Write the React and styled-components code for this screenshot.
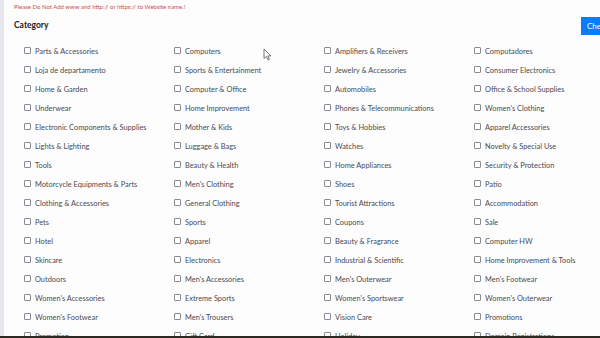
import styled, { createGlobalStyle } from 'styled-components';

const GlobalStyles = createGlobalStyle`
  html, body {
    margin: 0;
    padding: 0;
    background: #fdfdfe;
    overflow: hidden;
  }
  body {
    font-family: Lato, "Open Sans", sans-serif;
  }
`;

const CATEGORIES = [
  'Parts & Accessories', 'Computers', 'Amplifiers & Receivers', 'Computadores',
  'Loja de departamento', 'Sports & Entertainment', 'Jewelry & Accessories', 'Consumer Electronics',
  'Home & Garden', 'Computer & Office', 'Automobiles', 'Office & School Supplies',
  'Underwear', 'Home Improvement', 'Phones & Telecommunications', "Women's Clothing",
  'Electronic Components & Supplies', 'Mother & Kids', 'Toys & Hobbies', 'Apparel Accessories',
  'Lights & Lighting', 'Luggage & Bags', 'Watches', 'Novelty & Special Use',
  'Tools', 'Beauty & Health', 'Home Appliances', 'Security & Protection',
  'Motorcycle Equipments & Parts', "Men's Clothing", 'Shoes', 'Patio',
  'Clothing & Accessories', 'General Clothing', 'Tourist Attractions', 'Accommodation',
  'Pets', 'Sports', 'Coupons', 'Sale',
  'Hotel', 'Apparel', 'Beauty & Fragrance', 'Computer HW',
  'Skincare', 'Electronics', 'Industrial & Scientific', 'Home Improvement & Tools',
  'Outdoors', "Men's Accessories", "Men's Outerwear", "Men's Footwear",
  "Women's Accessories", 'Extreme Sports', "Women's Sportswear", "Women's Outerwear",
  "Women's Footwear", "Men's Trousers", 'Vision Care', 'Promotions',
  'Promotion', 'Gift Card', 'Holiday', 'Domain Registrations',
];

// ── Layout ────────────────────────────────────────────────────
const Page = styled.div`
  position: relative;
  width: 600px;
  height: 338px;
  display: flex;
  overflow: hidden;
  background: #fdfdfe;
`;

const SideStrip = styled.div`
  width: 4px;
  flex-shrink: 0;
  background: #e6e6ec;
`;

const Content = styled.div`
  flex: 1;
  padding: 3px 0 0 10px;
  min-width: 0;
`;

const Notice = styled.p`
  margin: 0;
  font-size: 6px;
  line-height: 8px;
  color: #cf4d4d;
`;

const HeaderRow = styled.div`
  display: flex;
  align-items: flex-start;
  justify-content: space-between;
  margin-top: 6px;
  margin-right: -30px;
`;

const Title = styled.h2`
  margin: 2px 0 0;
  font-size: 8.5px;
  line-height: 12px;
  font-weight: 700;
  color: #222;
`;

const CheckButton = styled.button`
  width: 49px;
  height: 18px;
  padding: 0 0 0 6px;
  border: none;
  background: #0a7cf7;
  color: #fff;
  font-family: Lato, sans-serif;
  font-size: 8px;
  text-align: left;
`;

const Grid = styled.div`
  display: grid;
  grid-template-columns: repeat(4, 150px);
  grid-auto-rows: 19px;
  margin: 10px 0 0 10px;
`;

const Item = styled.label`
  display: flex;
  align-items: center;
  gap: 4px;
  height: 13px;
  font-size: 7.4px;
  color: #4a4a52;
  white-space: nowrap;
`;

const Box = styled.span`
  width: 5px;
  height: 5px;
  border: 1px solid #8a8a92;
  border-radius: 1px;
  background: #fff;
  margin-top: -2px;
  flex-shrink: 0;
`;

const BottomBar = styled.div`
  position: absolute;
  left: 0;
  right: 0;
  bottom: 0;
  height: 2px;
  background: #2c2822;
`;

const Cursor = styled.svg`
  position: absolute;
  left: 263px;
  top: 48px;
`;

// ── App ───────────────────────────────────────────────────────
function App() {
  return (
    <>
      <GlobalStyles />
      <Page>
        <SideStrip />
        <Content>
          <Notice>Please Do Not Add www and http:// or https:// to Website name.!</Notice>
          <HeaderRow>
            <Title>Category</Title>
            <CheckButton>Check</CheckButton>
          </HeaderRow>
          <Grid>
            {CATEGORIES.map((name) => (
              <Item key={name}>
                <Box />
                {name}
              </Item>
            ))}
          </Grid>
        </Content>
        <BottomBar />
        <Cursor width="9" height="13" viewBox="0 0 9 13">
          <path d="M1 1 L1 10.5 L3.4 8.4 L5 12 L6.4 11.4 L4.9 7.9 L8 7.9 Z" fill="#fff" stroke="#555" strokeWidth="0.8" strokeLinejoin="round" />
        </Cursor>
      </Page>
    </>
  );
}

export default App;
